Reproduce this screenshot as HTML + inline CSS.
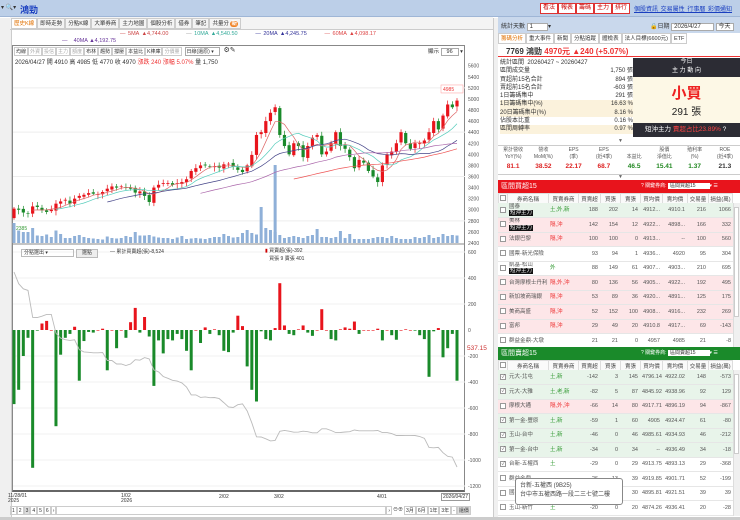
<!DOCTYPE html>
<html><head><meta charset="utf-8">
<style>
*{box-sizing:border-box;margin:0;padding:0}
body{width:740px;height:520px;overflow:hidden;background:#fff;font-family:"Liberation Sans","Noto Sans CJK TC",sans-serif;font-size:7px;color:#333;position:relative;white-space:nowrap}
.a{position:absolute}
.btn{position:absolute;border:1px solid #d33;background:#fff;color:#c00;font-size:6px;height:11px;line-height:9px;padding:0 2px}
table{border-collapse:collapse;font-size:5.5px;table-layout:fixed}
td{white-space:nowrap;overflow:hidden}
.tb td{height:14.5px;border-bottom:1px solid #e6e6e6;padding:0 2px;text-align:right;color:#555;line-height:6.5px}
.tb td.l{text-align:left}
.hd td{height:10px;background:#fafafa;border:1px solid #ddd;text-align:center;color:#444}
.cb{display:inline-block;width:6px;height:6px;border:1px solid #999;background:#fff;vertical-align:middle}
.tag{background:#111;color:#fff;padding:0 1px}
.tabs{display:flex;font-size:5.5px}
.tabs span{border:1px solid #ccc;padding:0 2px;height:11px;line-height:10px}
.tool{display:flex;font-size:5px}
.tool span{border:1px solid #ccc;padding:0 1px;height:9px;line-height:8px}
</style></head><body>
<div class="a" style="left:0;top:0;width:740px;height:17px;background:#bccfe8;border-bottom:1px solid #9fb6d6"></div>
<div class="a" style="left:1px;top:4px;font-size:6px;color:#333">▾ 🔍▾</div>
<div class="a" style="left:20px;top:3px;font-size:9px;color:#1a3fc0;font-weight:bold">鴻勁</div>
<div class="btn" style="left:540px;top:3px">看法</div>
<div class="btn" style="left:558px;top:3px">報表</div>
<div class="btn" style="left:576px;top:3px">籌碼</div>
<div class="btn" style="left:594px;top:3px">主力</div>
<div class="btn" style="left:612px;top:3px">排行</div>
<div class="a" style="left:634px;top:4px;font-size:6px;color:#1a3fc0;text-decoration:underline;word-spacing:1px">個股資訊 交易屬性 行事曆 彩價通知</div>
<div class="a" style="left:0;top:18px;width:12px;height:502px;background:#f0f0f0;border-right:1px solid #ccc"></div>
<div class="a" style="left:493px;top:18px;width:5px;height:502px;background:#f0f0f0;border-left:1px solid #ccc"></div>
<div class="a" style="left:10px;top:17px;width:483px;height:13px;background:#f4f4f4;border-bottom:1px solid #ccc"></div>
<div class="a tabs" style="left:11px;top:18px">
<span style="background:#fff;color:#e07000">歷史K線</span><span>即時走勢</span><span>分點K線</span><span>大單券商</span><span>主力地圖</span><span>個股分析</span><span>借券</span><span>筆記</span><span>共量分 <b style="background:#f08020;color:#fff;border-radius:4px;padding:0 1px">新</b></span>
</div>
<div class="a" style="left:120px;top:31px;font-size:5.5px;word-spacing:1px">
<span style="color:#c44">—</span> <span style="color:#c44">5MA ▲4,744.00</span>&nbsp;&nbsp;&nbsp;&nbsp;&nbsp;&nbsp;&nbsp;<span style="color:#999">—</span> <span style="color:#3a9">10MA ▲4,540.50</span>&nbsp;&nbsp;&nbsp;&nbsp;&nbsp;&nbsp;&nbsp;<span style="color:#339">—</span> <span style="color:#339">20MA ▲4,245.75</span>&nbsp;&nbsp;&nbsp;&nbsp;&nbsp;&nbsp;&nbsp;<span style="color:#d55">—</span> <span style="color:#d44">60MA ▲4,098.17</span></div>
<div class="a" style="left:62px;top:38px;font-size:5.5px;color:#639"><span>—</span>&nbsp;&nbsp;&nbsp;&nbsp;40MA ▲4,192.75</div>
<div class="a" style="left:12px;top:45px;width:453px;height:447px;border:1px solid #888;border-bottom:2px solid #666"></div>
<div class="a tool" style="left:14px;top:47px">
<span>均線</span><span style="color:#aaa">外資</span><span style="color:#aaa">投信</span><span style="color:#aaa">主力</span><span style="color:#aaa">額度</span><span>布林</span><span>趨勢</span><span>撐壓</span><span>本益比</span><span>K棒庫</span><span style="color:#aaa">分價量</span>
<span style="border-color:#aaa;margin-left:3px;width:35px">日線(還原) ▾</span><span style="margin-left:3px;font-size:7px;border:none">⚙✎</span></div>
<div class="a" style="left:428px;top:47px;font-size:5.5px">顯示 <span style="border:1px solid #aaa;padding:0 5px">96</span> ▾</div>
<div class="a" style="left:15px;top:57px;font-size:6px">2026/04/27 開 4910 高 4985 低 4770 收 4970 <span style="color:#e33">漲跌 240 漲幅 5.07%</span> 量 1,750</div>
<svg id="ch" class="a" style="left:0;top:0" width="495" height="520"></svg>
<div class="a" style="left:21px;top:249px;font-size:5px;border:1px solid #bbb;width:53px;height:8px;padding-left:2px;line-height:7px">分點選出 ▾</div>
<div class="a" style="left:76px;top:249px;font-size:5px;border:1px solid #bbb;background:#eee;padding:0 5px;line-height:7px">選點</div>
<div class="a" style="left:110px;top:248px;font-size:5px">— 累計買賣超(張)-8,524</div>
<div class="a" style="left:265px;top:247px;font-size:5px;line-height:8px"><span style="color:#c00">▮</span> 買賣超(張)-392<br>&nbsp;&nbsp;&nbsp;買張 9 賣張 401</div>
<div class="a" style="left:8px;top:494px;font-size:5px;line-height:5px">11/28/01<br>2025</div>
<div class="a" style="left:121px;top:494px;font-size:5px;line-height:5px">1/02<br>2026</div>
<div class="a" style="left:219px;top:494px;font-size:5px">2/02</div>
<div class="a" style="left:274px;top:494px;font-size:5px">3/02</div>
<div class="a" style="left:377px;top:494px;font-size:5px">4/01</div>
<div class="a" style="left:441px;top:493px;font-size:5px;border:1px solid #999;padding:0 1px">2026/04/27</div>
<div class="a tool" style="left:10px;top:506px;width:483px">
<span>1</span><span>2</span><span style="background:#ddd">3</span><span>4</span><span>5</span><span>6</span><span>›</span><span style="width:330px"></span><span>›</span><span style="border:none">⊖⊕</span><span>3月</span><span>6月</span><span>1年</span><span>3年</span><span>-</span><span style="background:#ddd">還價</span></div>
<div class="a" style="left:0;top:517px;width:740px;height:3px;background:#ccc"></div>

<div class="a" style="left:498px;top:17px;width:242px;height:16px;background:#c9d8ec"></div>
<div class="a" style="left:501px;top:21px;font-size:6px">統計天數 <span style="border:1px solid #aaa;background:#fff;padding:0 14px 0 2px">1</span>▾</div>
<div class="a" style="left:650px;top:21px;font-size:6px">🔒日期 <span style="border:1px solid #aaa;background:#fff;padding:0 12px 0 2px">2026/4/27</span> <span style="border:1px solid #aaa;background:#fff;padding:0 2px">今天</span></div>
<div class="a tabs" style="left:498px;top:33px">
<span style="color:#e07000;background:#fff">籌碼分析</span><span>重大事件</span><span>新聞</span><span>分點追蹤</span><span>體檢表</span><span>法人目標(6600元)</span><span>ETF</span></div>
<div class="a" style="left:498px;top:45px;width:242px;height:12px;border-bottom:1px solid #e33"></div>
<div class="a" style="left:506px;top:46px;font-size:8px;font-weight:bold">7769 鴻勁 <span style="color:#e33">4970元 ▲240 (+5.07%)</span></div>
<div class="a" style="left:500px;top:59px;width:133px;font-size:6px;line-height:8.3px">
<div>統計區間&nbsp; 20260427 ~ 20260427</div>
<div>區間成交量<span style="float:right">1,750 張</span></div>
<div>買超前15名合計<span style="float:right">894 張</span></div>
<div>賣超前15名合計<span style="float:right">-603 張</span></div>
<div>1日籌碼集中<span style="float:right">291 張</span></div>
<div style="background:#fbf2dc">1日籌碼集中(%)<span style="float:right">16.63 %</span></div>
<div style="background:#fbf2dc">20日籌碼集中(%)<span style="float:right">8.16 %</span></div>
<div>佔股本比重<span style="float:right">0.16 %</span></div>
<div style="background:#fbf2dc">區間周轉率<span style="float:right">0.97 %</span></div></div>
<div class="a" style="left:633px;top:58px;width:107px;height:19px;background:#2c2c34;color:#fff;text-align:center;font-size:6px;line-height:9px">今日<br>主 力 動 向</div>
<div class="a" style="left:633px;top:77px;width:107px;height:46px;background:#fdf8e6;text-align:center"><div style="color:#e22;font-size:15px;font-weight:bold;margin-top:5px">小買</div><div style="font-size:10px;color:#222">291 張</div></div>
<div class="a" style="left:633px;top:123px;width:107px;height:14px;background:#2c2c34;color:#fff;font-size:6.5px;line-height:14px;padding-left:12px">短沖主力 <span style="color:#f44">賣超占比23.89%</span> ?</div>
<div class="a" style="left:618px;top:138px;font-size:5px;color:#666">▼</div>
<div class="a" style="left:498px;top:145px;width:242px;height:30px;border-top:1px solid #ccc;border-bottom:1px solid #ccc"></div>
<div class="a" style="left:498px;top:147px;width:242px;display:flex;font-size:5px;text-align:center;color:#555;line-height:7px">
<div style="flex:1">累計營收<br>YoY(%)</div><div style="flex:1">營收<br>MoM(%)</div><div style="flex:1">EPS<br>(季)</div><div style="flex:1">EPS<br>(近4季)</div><div style="flex:1"><br>本益比</div><div style="flex:1">股價<br>淨值比</div><div style="flex:1">殖利率<br>(%)</div><div style="flex:1">ROE<br>(近4季)</div></div>
<div class="a" style="left:498px;top:163px;width:242px;display:flex;font-size:6.5px;text-align:center;font-weight:bold">
<div style="flex:1;color:#d22">81.1</div><div style="flex:1;color:#d22">38.52</div><div style="flex:1;color:#d22">22.17</div><div style="flex:1;color:#d22">68.7</div><div style="flex:1;color:#282">46.5</div><div style="flex:1;color:#282">15.41</div><div style="flex:1;color:#282">1.37</div><div style="flex:1;color:#333">21.3</div></div>
<div class="a" style="left:618px;top:174px;font-size:5px;color:#666">▼</div>
<div class="a" style="left:498px;top:180px;width:242px;height:13px;background:#e8141c;color:#fff;font-size:7px;line-height:13px;padding-left:3px">區間買超15<span style="position:absolute;left:143px;font-size:5px">? 關鍵券商: <span style="background:#fff;color:#333;padding:0 14px 0 2px">區間買超15</span>▾ ☰</span></div>
<table class="a" style="left:498px;top:193px;width:235px">
<colgroup><col style="width:9px"><col style="width:41px"><col style="width:30px"><col style="width:22px"><col style="width:20px"><col style="width:20px"><col style="width:22px"><col style="width:25px"><col style="width:21px"><col></colgroup>
<tr class="hd"><td><span class="cb"></span></td><td>券商名稱</td><td>買賣券商</td><td>買賣超</td><td>買張</td><td>賣張</td><td>買均價</td><td>賣均價</td><td>交易量</td><td>損益(萬)</td></tr>
</table>
<div class="a" style="left:498px;top:203px;width:235px;height:144px;overflow:hidden"><table class="tb" style="width:235px" id="bt"></table></div>
<div class="a" style="left:733px;top:203px;width:7px;height:144px;background:#f0f0f0;border-left:1px solid #ddd"></div>
<div class="a" style="left:734px;top:207px;width:5px;height:110px;background:#fff;border:1px solid #ccc"></div>
<div class="a" style="left:498px;top:347px;width:242px;height:13px;background:#1a8a2a;color:#fff;font-size:7px;line-height:13px;padding-left:3px">區間賣超15<span style="position:absolute;left:143px;font-size:5px">? 關鍵券商: <span style="background:#fff;color:#333;padding:0 14px 0 2px">區間賣超15</span>▾ ☰</span></div>
<table class="a" style="left:498px;top:360px;width:235px">
<colgroup><col style="width:9px"><col style="width:41px"><col style="width:30px"><col style="width:22px"><col style="width:20px"><col style="width:20px"><col style="width:22px"><col style="width:25px"><col style="width:21px"><col></colgroup>
<tr class="hd"><td><span class="cb"></span></td><td>券商名稱</td><td>買賣券商</td><td>買賣超</td><td>買張</td><td>賣張</td><td>買均價</td><td>賣均價</td><td>交易量</td><td>損益(萬)</td></tr>
</table>
<div class="a" style="left:498px;top:370px;width:235px;height:146px;overflow:hidden"><table class="tb" style="width:235px" id="st"></table></div>
<div class="a" style="left:733px;top:370px;width:7px;height:146px;background:#f0f0f0;border-left:1px solid #ddd"></div>
<div class="a" style="left:734px;top:374px;width:5px;height:80px;background:#fff;border:1px solid #ccc"></div>
<div class="a" style="left:515px;top:478px;width:108px;height:27px;background:#fff;border:1px solid #888;border-radius:3px;font-size:6px;line-height:9px;padding:3px 4px;color:#444">台新-五權西 (9B25)<br>台中市五權西路一段二三七號二樓</div>

<script>
var svg=document.getElementById('ch'),h='';
function L(x1,y1,x2,y2,c,w){h+='<line x1="'+x1+'" y1="'+y1+'" x2="'+x2+'" y2="'+y2+'" stroke="'+c+'" stroke-width="'+(w||1)+'"/>';}
function R(x,y,w,hh,c){if(hh<0){y+=hh;hh=-hh}h+='<rect x="'+x+'" y="'+y+'" width="'+w+'" height="'+Math.max(hh,0.6)+'" fill="'+c+'"/>';}
function T(x,y,s,c,fs){h+='<text x="'+x+'" y="'+y+'" font-size="'+(fs||5)+'" fill="'+(c||'#555')+'" font-family="Liberation Sans">'+s+'</text>';}
var C=[3020,3000,2950,2930,3060,3050,2990,2960,3000,3110,3150,3180,3110,3200,3250,3270,3300,3290,3280,3320,3380,3420,3400,3420,3400,3380,3310,3330,3250,3140,3400,3450,3480,3480,3450,3480,3500,3550,3700,3750,3800,3800,3780,3780,3760,3820,3830,3780,3720,3680,3800,3990,4350,4400,4600,4750,4850,4350,4150,4000,4200,4150,3950,4150,4300,4350,4000,4050,4200,4400,4150,4100,3950,3750,3900,3850,3700,3600,3500,3800,4000,4050,4200,4400,4200,4100,4200,4200,4250,4400,4600,4450,4700,4900,4850,4970];
var n=C.length,x0=14,dx=(457-14)/(n-1);
function py(p){return 65.7+(5600-p)*0.0554}
for(var p=2400;p<=5600;p+=200){T(468,py(p)+2,p);}
[2800,3600,4400,5200].forEach(function(p){L(13,py(p),465,py(p),'#eee')});
var V=[40,25,22,22,30,15,14,17,12,25,18,10,10,14,16,12,10,9,8,7,13,10,9,10,14,12,22,15,15,16,13,11,10,10,8,11,14,8,9,10,9,8,10,12,12,18,14,11,12,20,26,20,17,72,30,26,22,16,10,12,14,12,10,14,16,28,12,12,10,12,24,10,18,8,8,8,8,10,12,12,10,14,10,8,8,8,12,10,12,16,10,12,18,14,16,15];
for(var i=0;i<n;i++){R(x0+i*dx-1.5,243,3,-(V[i]||10)*0.5,'#8fb0d8');}
R(x0+56*dx-1.5,243,3,-78,'#8fb0d8');
for(var i=0;i<n;i++){var c=C[i],o=i?C[i-1]+(i%3-1)*15:2850;var up=c>=o,col=up?'#e8141c':'#1a8a2a',x=x0+i*dx;
var hi=Math.max(o,c)+30+(i*37%50),lo=Math.min(o,c)-30-(i*53%60);L(x,py(hi),x,py(lo),col,0.7);R(x-1.6,py(Math.max(o,c)),3.2,py(Math.min(o,c))-py(Math.max(o,c)),col);}
function ma(k,col,st){var d='';for(var i=(st||k-1);i<n;i++){var s=0;for(var j=i-k+1;j<=i;j++)s+=C[Math.max(j,0)];d+=(d?'L':'M')+(x0+i*dx).toFixed(1)+' '+py(s/k).toFixed(1);}h+='<path d="'+d+'" fill="none" stroke="'+col+'" stroke-width="0.7"/>';}
ma(5,'#d66');ma(10,'#5cb');ma(20,'#448',20);ma(40,'#a6a',40);ma(60,'#e55',60);
h+='<rect x="441" y="'+(py(5180)-4)+'" width="22" height="8" fill="#fff" stroke="#f99" stroke-width="0.5"/>';T(443,py(5180)+2,'4985','#e33');
T(16,230,'2385','#393');
L(13,244,465,244,'#888');
function ly(v){return 330-v*0.13}
for(var v=-1200;v<=600;v+=200){T(468,ly(v)+2,v);if(v!=0)L(13,ly(v),465,ly(v),'#f2f2f2');}
var B=[-570,-460,-200,-60,-1060,-5,50,70,0,-740,-190,-60,-30,25,-390,-85,-15,-20,0,10,-310,0,-140,0,-60,60,170,-20,100,-50,-430,-80,-180,-70,-80,-30,-70,-160,-310,0,-100,20,-30,5,-40,-160,-170,-20,110,30,-280,-460,-550,-10,-70,-80,15,360,35,-30,-40,5,35,-20,-45,0,160,0,-70,-80,5,20,10,65,-30,0,0,0,10,-80,0,-40,-75,0,5,0,-5,-40,-70,-360,-10,15,-210,-140,-30,-390];
var m=B.length,bx=(457-14)/(m-1);
for(var i=0;i<m;i++){R(14+i*bx-1.5,330,3,-B[i]*0.13,B[i]>=0?'#e8141c':'#1a8a2a');}
var cum=[],s=0;for(i=0;i<m;i++){s+=B[i];cum.push(s)}var mn=Math.min.apply(0,cum),mx=Math.max.apply(0,cum);
var d='';for(i=0;i<m;i++){d+=(d?'L':'M')+(14+i*bx).toFixed(1)+' '+(272+(mx-cum[i])/(mx-mn)*195).toFixed(1);}
h+='<path d="'+d+'" fill="none" stroke="#bbb" stroke-width="0.9"/>';
T(467,350,'537.15','#c33',6.5);
svg.innerHTML=h;
function rows(id,data){var t='<colgroup><col style="width:9px"><col style="width:41px"><col style="width:30px"><col style="width:22px"><col style="width:20px"><col style="width:20px"><col style="width:22px"><col style="width:25px"><col style="width:21px"><col></colgroup>';data.forEach(function(r){t+='<tr style="background:'+r[0]+'"><td><span class="cb">'+(r[1]?'<span style="font-size:5px;color:#555;line-height:4px;display:block">✓</span>':'')+'</span></td><td class="l" style="font-size:5.5px">'+r[2]+'</td><td class="l" style="color:'+(r[3].indexOf('沖')>=0||r[3].indexOf('隔')>=0?'#e33':'#393')+'">'+r[3]+'</td>';for(var k=4;k<11;k++)t+='<td>'+r[k]+'</td>';t+='</tr>'});document.getElementById(id).innerHTML=t;}
var G='#e8f4ea',P='#fde6e8',W='#fff';
rows('bt',[[G,0,'國泰<br><span class="tag">短沖主力</span>','土,外,新',188,202,14,'4912...','4910.1',216,1066],[P,0,'美林<br><span class="tag">短沖主力</span>','隔,沖',142,154,12,'4922...','4898...',166,332],[P,0,'法銀巴黎','隔,沖',100,100,0,'4913...','--',100,560],[W,0,'國票-新光保險','',93,94,1,'4936...',4920,95,304],[W,0,'凱基-松山<br><span class="tag">短沖主力</span>','外',88,149,61,'4907...','4903...',210,695],[P,0,'台灣摩根士丹利','隔,外,沖',80,136,56,'4905...','4922...',192,495],[P,0,'新加坡商瑞銀','隔,沖',53,89,36,'4920...','4891...',125,175],[P,0,'美商高盛','隔,沖',52,152,100,'4908...','4916...',232,269],[P,0,'富邦','隔,沖',29,49,20,'4910.8','4917...',69,-143],[W,0,'群益金鼎-大墩','',21,21,0,'4957','4985',21,-8]]);
rows('st',[[G,1,'元大-北屯','土,新',-142,3,145,'4796.14','4922.02',148,-573],[G,1,'元大-大雅','土,老,新',-82,5,87,'4845.92','4938.96',92,129],[P,0,'摩根大通','隔,外,沖',-66,14,80,'4917.71','4896.19',94,-867],[G,1,'第一金-豐原','土,新',-59,1,60,'4905','4924.47',61,-80],[G,1,'玉山-台中','土,新',-46,0,46,'4985.61','4934.93',46,-212],[G,1,'第一金-台中','土,新',-34,0,34,'--','4936.49',34,-18],[W,1,'台新-五權西','土',-29,0,29,'4913.75','4893.13',29,-368],[W,0,'群益金鼎','',-26,13,39,'4919.85','4901.71',52,-199],[W,0,'國票','',-21,9,30,'4895.81','4921.51',39,39],[W,0,'玉山-新竹','土',-20,0,20,'4874.26','4936.41',20,-28]]);
</script>
</body></html>
